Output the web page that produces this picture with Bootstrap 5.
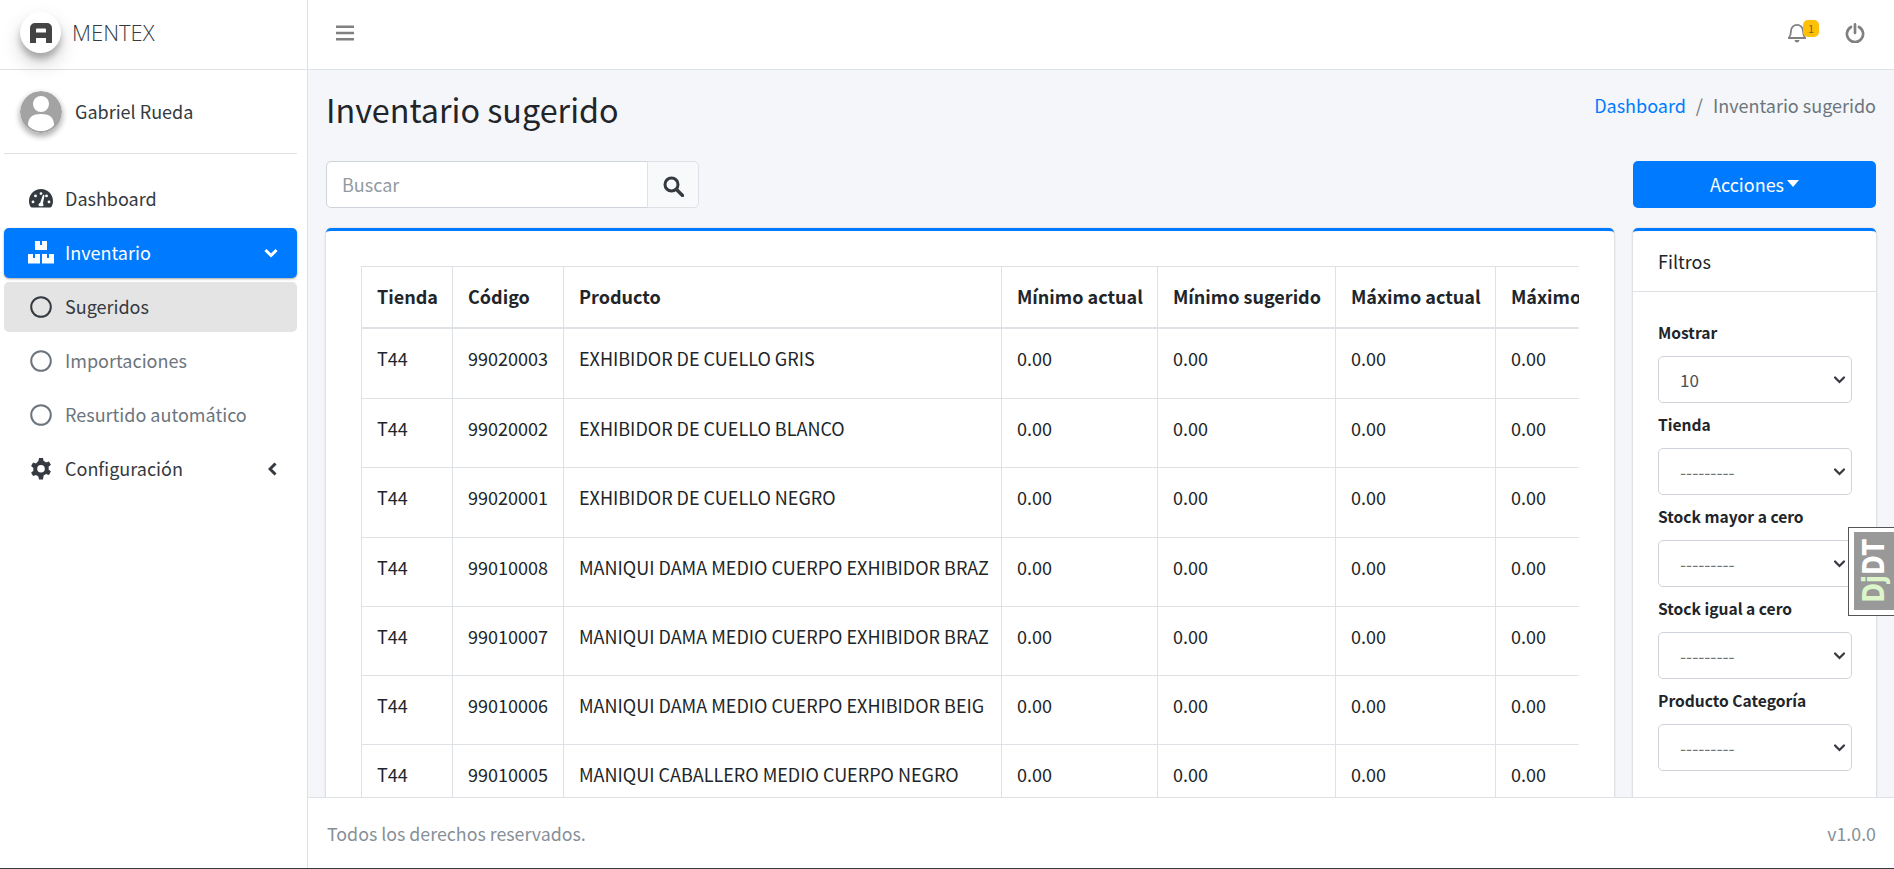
<!DOCTYPE html>
<html lang="es">
<head>
<meta charset="utf-8">
<title>Inventario sugerido</title>
<link rel="stylesheet" href="https://cdn.jsdelivr.net/npm/bootstrap@5.3.0/dist/css/bootstrap.min.css">
<style>
html,body{height:100%;overflow:hidden}
body{font-family:"Noto Sans CJK SC","Liberation Sans",sans-serif;font-size:18px;line-height:28.8px;background:#f4f6f9;color:#212529}
.app-shell{height:869px;border-bottom:1px solid #343a40}
.side-col{width:308px;flex:none;background:#fff;border-right:1px solid #dee2e6}
.brand-row{height:70px;border-bottom:1px solid #dee2e6;padding:0 0 5px 20px;gap:11px}
.brand-mark{width:41px;height:41px;border-radius:50%;background:#fff;box-shadow:0 10px 20px rgba(0,0,0,.19),0 6px 6px rgba(0,0,0,.23)}
.brand-name{font-family:"Open Sans","Noto Sans",sans-serif;font-size:22px;font-weight:300;color:#343a40}
.user-row{height:84px;margin:0 10px 0 4px;border-bottom:1px solid #dee2e6;padding-left:16px;gap:13px;color:#343a40}
.user-pic{width:42px;height:42px;border-radius:50%;box-shadow:0 3px 6px rgba(0,0,0,.16),0 3px 6px rgba(0,0,0,.23)}
.side-nav{padding:20px 10px 0 4px;gap:4px}
.side-link{height:50px;border-radius:5px;padding-left:25px;gap:12px;color:#343a40;text-decoration:none}
.side-link:hover{color:#343a40}
.side-link span{padding-bottom:2px}
.side-link svg.lead-ic{width:24px;height:24px;flex:none}
.side-link svg.lead-ic.box-ic{width:26px;margin:-2px -1px 0}
.side-link .chev{margin-left:auto;margin-right:19px}
.side-link.is-open,.side-link.is-open:hover{background:#007bff;color:#fff;box-shadow:0 1px 3px rgba(0,0,0,.12),0 1px 2px rgba(0,0,0,.24)}
.side-link.is-current{background:#e4e4e4;color:#343a40}
.side-link.is-muted,.side-link.is-muted:hover{color:#6c757d}
.top-bar{height:70px;background:#fff;border-bottom:1px solid #dee2e6;padding:0 29px 3px 28px}
.main-scroll{padding:0 18px;overflow:hidden;min-height:0}
.page-title{font-size:32.3px;line-height:41px;font-weight:400;margin:0}
.head-row{height:91px;padding-bottom:12px}
.crumb-box{color:#6c757d;margin-bottom:8px}
.crumb-box a{color:#007bff;text-decoration:none}
.crumb-sep{padding:0 10px}
.tool-row{height:47px;margin-bottom:20px}
.search-box{width:373px}
.search-box .form-control{height:47px;font-size:18px;padding:0 15px 2px;border-color:#ced4da;border-radius:5px 0 0 5px;color:#495057}
.search-box .form-control::placeholder{color:#939ba2}
.search-box .btn{width:52px;height:47px;padding:0;background:#f8f9fa;border-color:#dee2e6;border-radius:0 5px 5px 0}
.act-btn,.act-btn:hover{width:243px;height:47px;background:#007bff;border:0;color:#fff;font-size:18px;border-radius:5px}
.act-btn.dropdown-toggle::after{border-top-width:7px;border-left-width:6px;border-right-width:6px;margin-left:3px}
.panel-wrap{gap:19px}
.table-panel{width:1288px;flex:none;background:#fff;border-top:3.6px solid #007bff;border-radius:5px 5px 0 0;box-shadow:0 0 1px rgba(0,0,0,.125),0 1px 3px rgba(0,0,0,.2);padding:35px 36px 0 35px;height:600px;overflow:hidden}
.table-clip{overflow:hidden;width:1218px}
.data-grid{width:1400px;table-layout:fixed;border-collapse:collapse;margin:0;font-size:18px}
.data-grid th,.data-grid td{border:1px solid #dee2e6;padding:15px 15px 0;vertical-align:top;white-space:nowrap;overflow:hidden}
.data-grid thead th{height:61px;border-bottom:2px solid #dee2e6;font-weight:700}
.data-grid tbody td{height:69.3px}
.data-grid tbody tr:first-child td{height:71px}
.filter-panel{width:243px;flex:none;background:#fff;border-top:3.6px solid #007bff;border-radius:5px 5px 0 0;box-shadow:0 0 1px rgba(0,0,0,.125),0 1px 3px rgba(0,0,0,.2);height:600px}
.filter-head{height:61px;border-bottom:1px solid #dee2e6;padding-left:25px;color:#212529}
.filter-body{padding:28px 24px 0 25px}
.filter-lbl{font-size:15.6px;line-height:24px;font-weight:700;margin:0 0 12.300px;display:block;color:#212529}
.filter-sel{height:47px;font-size:17.5px;line-height:24px;padding:0 24px 0 21px;color:#6c757d;border-color:#ced4da;border-radius:5px;margin-bottom:8.700px;background-position:right 4px center;background-size:15px 13px;background-image:url("data:image/svg+xml,%3csvg xmlns='http://www.w3.org/2000/svg' viewBox='0 0 16 16'%3e%3cpath fill='none' stroke='%23343a40' stroke-linecap='round' stroke-width='2.800' d='M2.500 5.500 8 11l5.500-5.500'/%3e%3c/svg%3e")}
.filter-sel.has-val{color:#495057;font-size:17px}
.foot-bar{height:71px;background:#fff;border-top:1px solid #dee2e6;padding:0 18px 0 19px;color:#869099;font-size:17.8px}
.djdt-tab{position:fixed;right:0;top:527px;width:46px;height:89px;background:#fff;border:1px solid #555;border-right:0;padding:4px 0 5px 5px}
.djdt-tab span{display:flex;width:100%;height:100%;background:#999;align-items:center;justify-content:center;overflow:hidden}
.djdt-tab b{display:block;transform:rotate(-90deg) scaleX(.79);white-space:nowrap;font:700 30px/1 "DejaVu Sans",sans-serif;color:#fff}
.djdt-tab i{font-style:normal;color:#dcf6c9}
.note-wrap{position:relative;display:inline-block}
.note-pill{position:absolute;left:15px;top:-3px;width:16px;height:17px;border-radius:5px;background:#ffc107;color:#7a6520;font-size:11px;line-height:17px;text-align:center}
</style>
</head>
<body>
<div class="app-shell d-flex">
  <aside class="side-col d-flex flex-column">
    <div class="brand-row d-flex align-items-center">
      <div class="brand-mark d-flex align-items-center justify-content-center">
        <svg width="22" height="21" viewBox="0 0 22 21"><path d="M0 21V6a5 5 0 0 1 5-5h12a5 5 0 0 1 5 5v15h-6v-5H6v5zM6 10.500h10V7.500a1 1 0 0 0-1-1H7a1 1 0 0 0-1 1z" fill="#444" fill-rule="evenodd"/></svg>
      </div>
      <span class="brand-name">MENTEX</span>
    </div>
    <div class="user-row d-flex align-items-center">
      <svg class="user-pic" viewBox="0 0 42 42"><circle cx="21" cy="21" r="21" fill="#a3a3a3"/><circle cx="21" cy="13" r="8" fill="#fff"/><path d="M8 34c0-8 5-11 13-11s13 3 13 11c-3 4-8 6-13 6s-10-2-13-6z" fill="#fff"/></svg>
      <span>Gabriel Rueda</span>
    </div>
    <nav class="side-nav d-flex flex-column">
      <a class="side-link d-flex align-items-center" href="#">
        <svg class="lead-ic" viewBox="0 0 24 24"><path fill="#343a40" fill-rule="evenodd" d="M12 2C5.400 2 0 7.400 0 14c0 2.200.6 4.300 1.700 6.100.2.300.6.500 1 .5h18.600c.4 0 .8-.2 1-.5C23.400 18.300 24 16.200 24 14 24 7.400 18.600 2 12 2zm0 3.200a1.400 1.400 0 1 1 0 2.800 1.400 1.400 0 0 1 0-2.800zM4 16.300a1.400 1.400 0 1 1 0-2.800 1.400 1.400 0 0 1 0 2.800zm2.500-6a1.400 1.400 0 1 1 0-2.800 1.400 1.400 0 0 1 0 2.800zm8 8.200c-.2.600-1 .9-1.400.8h-2.400c-.9-.3-1.400-1.200-1.100-2.100.2-.7.800-1.100 1.500-1.200l2.600-7.600c.2-.5.700-.7 1.100-.6.500.2.700.7.600 1.100l-1.500 7.700c.5.500.8 1.200.6 1.900zm3-8.200a1.400 1.400 0 1 1 0-2.800 1.400 1.400 0 0 1 0 2.800zM20 16.300a1.400 1.400 0 1 1 0-2.800 1.400 1.400 0 0 1 0 2.800z"/></svg>
        <span>Dashboard</span>
      </a>
      <a class="side-link is-open d-flex align-items-center" href="#">
        <svg class="lead-ic box-ic" viewBox="0 0 26 24"><path fill="#fff" fill-rule="evenodd" d="M7 1h5v4h2V1h5v9H7zM0 14h5v4h2v-4h5v9.500H0zM14 14h5v4h2v-4h5v9.500H14z"/></svg>
        <span>Inventario</span>
        <svg class="chev" width="14" height="10" viewBox="0 0 14 10"><path d="M1.500 2l5.500 5.500L12.500 2" fill="none" stroke="#fff" stroke-width="3"/></svg>
      </a>
      <a class="side-link is-current d-flex align-items-center" href="#">
        <svg class="lead-ic" viewBox="0 0 24 24"><circle cx="12" cy="12" r="9.800" fill="none" stroke="#343a40" stroke-width="2"/></svg>
        <span>Sugeridos</span>
      </a>
      <a class="side-link is-muted d-flex align-items-center" href="#">
        <svg class="lead-ic" viewBox="0 0 24 24"><circle cx="12" cy="12" r="9.800" fill="none" stroke="#6c757d" stroke-width="2"/></svg>
        <span>Importaciones</span>
      </a>
      <a class="side-link is-muted d-flex align-items-center" href="#">
        <svg class="lead-ic" viewBox="0 0 24 24"><circle cx="12" cy="12" r="9.800" fill="none" stroke="#6c757d" stroke-width="2"/></svg>
        <span>Resurtido automático</span>
      </a>
      <a class="side-link d-flex align-items-center" href="#">
        <svg class="lead-ic" viewBox="0 0 24 24"><path fill="#343a40" fill-rule="evenodd" d="M10 1h4l.6 3a8.500 8.500 0 0 1 2.400 1.400l2.900-1 2 3.400-2.300 2a8.500 8.500 0 0 1 0 2.800l2.300 2-2 3.400-2.900-1a8.500 8.500 0 0 1-2.400 1.400L14 22.500h-4l-.6-3a8.500 8.500 0 0 1-2.400-1.400l-2.900 1-2-3.400 2.300-2a8.500 8.500 0 0 1 0-2.800l-2.300-2 2-3.400 2.900 1A8.500 8.500 0 0 1 9.400 4zM12 8a3.800 3.800 0 1 0 0 7.600A3.800 3.800 0 0 0 12 8z"/></svg>
        <span>Configuración</span>
        <svg class="chev" width="10" height="14" viewBox="0 0 10 14"><path d="M7.500 1.500L2 7l5.500 5.500" fill="none" stroke="#343a40" stroke-width="3"/></svg>
      </a>
    </nav>
  </aside>
  <div class="flex-grow-1 d-flex flex-column min-vw-0 overflow-hidden">
    <header class="top-bar d-flex align-items-center justify-content-between flex-shrink-0">
      <svg width="18" height="16" viewBox="0 0 18 16"><path d="M0 1.700h18M0 8h18M0 14.300h18" stroke="#808080" stroke-width="2.500"/></svg>
      <div class="d-flex align-items-center" style="gap:39px">
        <span class="note-wrap">
          <svg class="d-block" width="18" height="20" viewBox="0 0 18 20"><path d="M9 1.800a6 6 0 0 0-6 6c0 4-.8 5.500-2.200 7.200h16.400C15.800 13.300 15 11.800 15 7.800a6 6 0 0 0-6-6z" fill="none" stroke="#808080" stroke-width="1.800"/><path d="M6.500 17a2.500 2.500 0 0 0 5 0z" fill="#808080"/></svg>
          <span class="note-pill">1</span>
        </span>
        <svg width="20" height="20" viewBox="0 0 21 21"><path d="M6.300 4.200a8.500 8.500 0 1 0 8.400 0" fill="none" stroke="#808080" stroke-width="2.800" stroke-linecap="round"/><path d="M10.500 1.500v9" stroke="#808080" stroke-width="2.800" stroke-linecap="round"/></svg>
      </div>
    </header>
    <main class="main-scroll flex-grow-1">
      <div class="head-row d-flex align-items-center justify-content-between">
        <h1 class="page-title">Inventario sugerido</h1>
        <div class="crumb-box"><a href="#">Dashboard</a><span class="crumb-sep">/</span>Inventario sugerido</div>
      </div>
      <div class="tool-row d-flex justify-content-between">
        <div class="search-box input-group flex-nowrap">
          <input class="form-control" placeholder="Buscar">
          <button class="btn flex-shrink-0" type="button" aria-label="Buscar"><svg width="21" height="21" viewBox="0 0 21 21"><circle cx="8.500" cy="8.500" r="6.500" fill="none" stroke="#343a40" stroke-width="3"/><path d="M13.500 13.500l6 6" stroke="#343a40" stroke-width="3.400" stroke-linecap="round"/></svg></button>
        </div>
        <button class="btn act-btn dropdown-toggle" type="button">Acciones</button>
      </div>
      <div class="panel-wrap d-flex">
        <section class="table-panel">
          <div class="table-clip">
            <table class="data-grid">
              <colgroup><col style="width:91px"><col style="width:111px"><col style="width:438px"><col style="width:156px"><col style="width:178px"><col style="width:160px"><col style="width:266px"></colgroup>
              <thead><tr><th>Tienda</th><th>Código</th><th>Producto</th><th>Mínimo actual</th><th>Mínimo sugerido</th><th>Máximo actual</th><th>Máximo sugerido</th></tr></thead>
              <tbody>
                <tr><td>T44</td><td>99020003</td><td>EXHIBIDOR DE CUELLO GRIS</td><td>0.00</td><td>0.00</td><td>0.00</td><td>0.00</td></tr>
                <tr><td>T44</td><td>99020002</td><td>EXHIBIDOR DE CUELLO BLANCO</td><td>0.00</td><td>0.00</td><td>0.00</td><td>0.00</td></tr>
                <tr><td>T44</td><td>99020001</td><td>EXHIBIDOR DE CUELLO NEGRO</td><td>0.00</td><td>0.00</td><td>0.00</td><td>0.00</td></tr>
                <tr><td>T44</td><td>99010008</td><td>MANIQUI DAMA MEDIO CUERPO EXHIBIDOR BRAZ</td><td>0.00</td><td>0.00</td><td>0.00</td><td>0.00</td></tr>
                <tr><td>T44</td><td>99010007</td><td>MANIQUI DAMA MEDIO CUERPO EXHIBIDOR BRAZ</td><td>0.00</td><td>0.00</td><td>0.00</td><td>0.00</td></tr>
                <tr><td>T44</td><td>99010006</td><td>MANIQUI DAMA MEDIO CUERPO EXHIBIDOR BEIG</td><td>0.00</td><td>0.00</td><td>0.00</td><td>0.00</td></tr>
                <tr><td>T44</td><td>99010005</td><td>MANIQUI CABALLERO MEDIO CUERPO NEGRO</td><td>0.00</td><td>0.00</td><td>0.00</td><td>0.00</td></tr>
              </tbody>
            </table>
          </div>
        </section>
        <aside class="filter-panel">
          <div class="filter-head d-flex align-items-center">Filtros</div>
          <div class="filter-body">
            <label class="filter-lbl">Mostrar</label>
            <select class="form-select filter-sel has-val"><option>10</option></select>
            <label class="filter-lbl">Tienda</label>
            <select class="form-select filter-sel"><option>---------</option></select>
            <label class="filter-lbl">Stock mayor a cero</label>
            <select class="form-select filter-sel"><option>---------</option></select>
            <label class="filter-lbl">Stock igual a cero</label>
            <select class="form-select filter-sel"><option>---------</option></select>
            <label class="filter-lbl">Producto Categoría</label>
            <select class="form-select filter-sel"><option>---------</option></select>
          </div>
        </aside>
      </div>
    </main>
    <footer class="foot-bar d-flex align-items-center justify-content-between flex-shrink-0">
      <span>Todos los derechos reservados.</span>
      <span>v1.0.0</span>
    </footer>
  </div>
</div>
<div class="djdt-tab"><span><b><i>Dj</i>DT</b></span></div>
<script src="https://cdn.jsdelivr.net/npm/bootstrap@5.3.0/dist/js/bootstrap.bundle.min.js"></script>
</body>
</html>
